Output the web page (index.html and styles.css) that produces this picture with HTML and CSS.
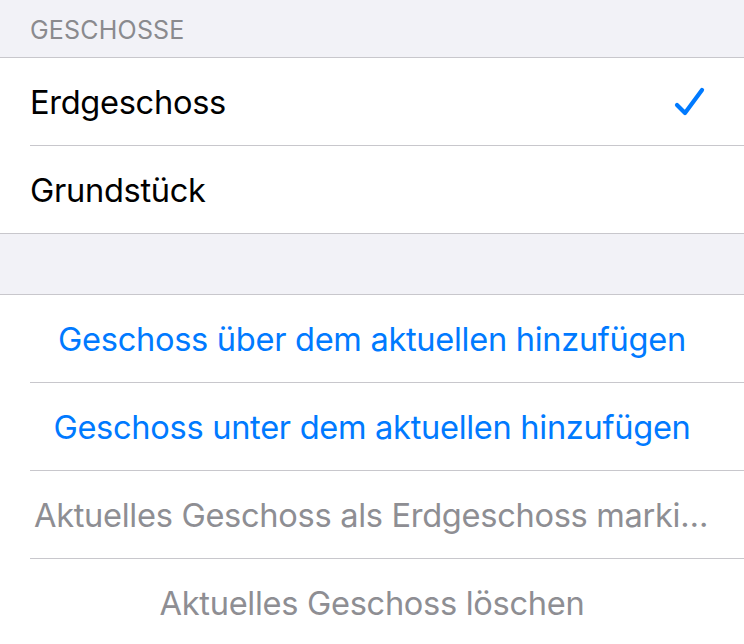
FILE: index.html
```html
<!DOCTYPE html>
<html lang="de">
<head>
<meta charset="utf-8">
<link rel="stylesheet" href="styles.css">
</head>
<body>
<div class="screen">
  <div class="section-header">GESCHOSSE</div>
  <ul class="group">
    <li class="row">
      <span class="label">Erdgeschoss</span>
      <svg class="check" width="32" height="30" viewBox="0 0 32 30"><path d="M3 18 L11 26 L28 3" fill="none" stroke="#007aff" stroke-width="4.2" stroke-linecap="round" stroke-linejoin="round"/></svg>
    </li>
    <li class="row"><span class="label">Grundstück</span></li>
  </ul>
  <div class="spacer"></div>
  <ul class="group">
    <li class="row action blue"><span class="label">Geschoss über dem aktuellen hinzufügen</span></li>
    <li class="row action blue"><span class="label">Geschoss unter dem aktuellen hinzufügen</span></li>
    <li class="row action gray"><span class="label">Aktuelles Geschoss als Erdgeschoss markieren</span></li>
    <li class="row action gray"><span class="label">Aktuelles Geschoss löschen</span></li>
  </ul>
</div>
</body>
</html>
```
FILE: styles.css
```css
html, body {
  margin: 0;
  padding: 0;
  background: #f2f2f7;
}
.screen {
  width: 744px;
  height: 644px;
  overflow: hidden;
  font-family: Inter, "Liberation Sans", sans-serif;
  background: #f2f2f7;
}
.section-header {
  height: 58px;
  box-sizing: border-box;
  padding: 15px 30px 0;
  font-size: 25px;
  color: #8a8a8e;
  letter-spacing: 0.2px;
  border-bottom: 1px solid #c8c7cc;
}
.group {
  list-style: none;
  margin: 0;
  padding: 0 0 0 30px;
  background: #fff;
  border-bottom: 1px solid #c8c7cc;
}
.group + .spacer + .group {
  border-top: 1px solid #c8c7cc;
}
.row {
  height: 87px;
  display: flex;
  align-items: center;
  padding-right: 38px;
  border-bottom: 1px solid #c8c7cc;
  font-size: 32.6px;
  color: #000;
  letter-spacing: -0.3px;
}
.row:last-child {
  border-bottom: none;
}
.label {
  flex: 1;
  min-width: 0;
  white-space: nowrap;
  overflow: hidden;
  text-overflow: ellipsis;
}
.check {
  flex: none;
}
.spacer {
  height: 60px;
}
.action {
  padding-right: 34px;
  padding-left: 4px;
  text-align: center;
}
.blue { color: #007aff; }
.gray { color: #8e8e93; }
```
